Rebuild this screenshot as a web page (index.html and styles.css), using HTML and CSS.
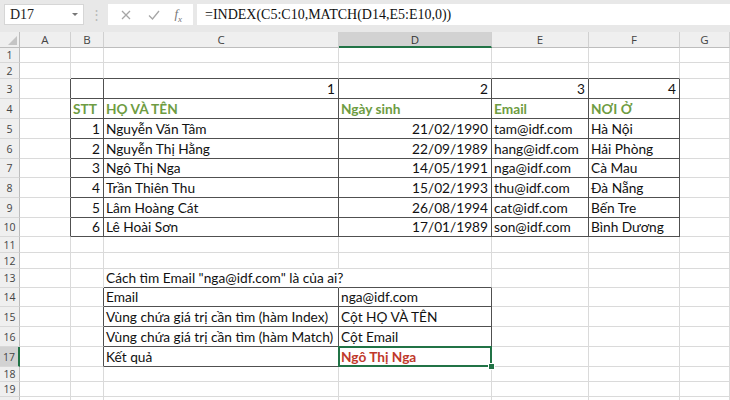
FILE: index.html
```html
<!DOCTYPE html>
<html>
<head>
<meta charset="utf-8">
<link rel="stylesheet" href="styles.css">
</head>
<body>
<div class="app">
  <div class="toolbar">
    <div class="namebox"><span class="nb-text">D17</span><span class="caret"></span></div>
    <div class="dots">⋮</div>
    <div class="fxbox">
      <svg class="ic" width="14" height="14" viewBox="0 0 14 14"><path d="M3 3 L11 11 M11 3 L3 11" stroke="#a6a6a6" stroke-width="1.3" fill="none"/></svg>
      <svg class="ic" width="14" height="14" viewBox="0 0 14 14"><path d="M2 7.5 L5.5 11 L12 3" stroke="#a6a6a6" stroke-width="1.3" fill="none"/></svg>
      <span class="fx">f<sub>x</sub></span>
    </div>
    <div class="formula">=INDEX(C5:C10,MATCH(D14,E5:E10,0))</div>
  </div>
  <div class="sheet">
    <!-- header -->
    <div class="corner"><span class="tri"></span></div>
    <div class="ch">A</div><div class="ch">B</div><div class="ch">C</div><div class="ch sel">D</div><div class="ch">E</div><div class="ch">F</div><div class="ch">G</div>
    <!-- 1 -->
    <div class="rh">1</div><div class="c"></div><div class="c"></div><div class="c"></div><div class="c"></div><div class="c"></div><div class="c"></div><div class="c"></div>
    <!-- 2 -->
    <div class="rh">2</div><div class="c"></div><div class="c tt"></div><div class="c tt"></div><div class="c tt"></div><div class="c tt"></div><div class="c tt"></div><div class="c"></div>
    <!-- 3 -->
    <div class="rh">3</div><div class="c tl"></div><div class="c t"></div><div class="c t r">1</div><div class="c t r">2</div><div class="c t r">3</div><div class="c t r">4</div><div class="c"></div>
    <!-- 4 -->
    <div class="rh">4</div><div class="c tl"></div><div class="c t hd">STT</div><div class="c t hd">HỌ VÀ TÊN</div><div class="c t hd">Ngày sinh</div><div class="c t hd">Email</div><div class="c t hd">NƠI Ở</div><div class="c"></div>
    <!-- 5 -->
    <div class="rh">5</div><div class="c tl"></div><div class="c t r">1</div><div class="c t">Nguyễn Văn Tâm</div><div class="c t r">21/02/1990</div><div class="c t">tam@idf.com</div><div class="c t">Hà Nội</div><div class="c"></div>
    <!-- 6 -->
    <div class="rh">6</div><div class="c tl"></div><div class="c t r">2</div><div class="c t">Nguyễn Thị Hằng</div><div class="c t r">22/09/1989</div><div class="c t">hang@idf.com</div><div class="c t">Hải Phòng</div><div class="c"></div>
    <!-- 7 -->
    <div class="rh">7</div><div class="c tl"></div><div class="c t r">3</div><div class="c t">Ngô Thị Nga</div><div class="c t r">14/05/1991</div><div class="c t">nga@idf.com</div><div class="c t">Cà Mau</div><div class="c"></div>
    <!-- 8 -->
    <div class="rh">8</div><div class="c tl"></div><div class="c t r">4</div><div class="c t">Trần Thiên Thu</div><div class="c t r">15/02/1993</div><div class="c t">thu@idf.com</div><div class="c t">Đà Nẵng</div><div class="c"></div>
    <!-- 9 -->
    <div class="rh">9</div><div class="c tl"></div><div class="c t r">5</div><div class="c t">Lâm Hoàng Cát</div><div class="c t r">26/08/1994</div><div class="c t">cat@idf.com</div><div class="c t">Bến Tre</div><div class="c"></div>
    <!-- 10 -->
    <div class="rh">10</div><div class="c tl"></div><div class="c t r">6</div><div class="c t">Lê Hoài Sơn</div><div class="c t r">17/01/1989</div><div class="c t">son@idf.com</div><div class="c t">Bình Dương</div><div class="c"></div>
    <!-- 11 -->
    <div class="rh">11</div><div class="c"></div><div class="c"></div><div class="c"></div><div class="c"></div><div class="c"></div><div class="c"></div><div class="c"></div>
    <!-- 12 -->
    <div class="rh">12</div><div class="c"></div><div class="c"></div><div class="c"></div><div class="c"></div><div class="c"></div><div class="c"></div><div class="c"></div>
    <!-- 13 -->
    <div class="rh">13</div><div class="c"></div><div class="c"></div><div class="c tt over">Cách tìm Email "nga@idf.com" là của ai?</div><div class="c tt"></div><div class="c"></div><div class="c"></div><div class="c"></div>
    <!-- 14 -->
    <div class="rh">14</div><div class="c"></div><div class="c tl"></div><div class="c t">Email</div><div class="c t">nga@idf.com</div><div class="c"></div><div class="c"></div><div class="c"></div>
    <!-- 15 -->
    <div class="rh">15</div><div class="c"></div><div class="c tl"></div><div class="c t">Vùng chứa giá trị cần tìm (hàm Index)</div><div class="c t">Cột HỌ VÀ TÊN</div><div class="c"></div><div class="c"></div><div class="c"></div>
    <!-- 16 -->
    <div class="rh">16</div><div class="c"></div><div class="c tl"></div><div class="c t">Vùng chứa giá trị cần tìm (hàm Match)</div><div class="c t">Cột Email</div><div class="c"></div><div class="c"></div><div class="c"></div>
    <!-- 17 -->
    <div class="rh rsel">17</div><div class="c"></div><div class="c tl"></div><div class="c t">Kết quả</div><div class="c t res active">Ngô Thị Nga</div><div class="c"></div><div class="c"></div><div class="c"></div>
    <!-- 18 -->
    <div class="rh">18</div><div class="c"></div><div class="c"></div><div class="c"></div><div class="c"></div><div class="c"></div><div class="c"></div><div class="c"></div>
    <!-- 19 -->
    <div class="rh">19</div><div class="c"></div><div class="c"></div><div class="c"></div><div class="c"></div><div class="c"></div><div class="c"></div><div class="c"></div>
    <!-- 20 -->
    <div class="rh"></div><div class="c"></div><div class="c"></div><div class="c"></div><div class="c"></div><div class="c"></div><div class="c"></div><div class="c"></div>
  </div>
</div>
</body>
</html>
```
FILE: styles.css
```css
* { box-sizing: border-box; }
html, body { margin: 0; padding: 0; background: #fff; }
.app { width: 730px; height: 400px; overflow: hidden; font-family: "Lato", "Open Sans", sans-serif; }

.toolbar {
  height: 32px;
  background: #e8e8e8;
  display: flex;
  align-items: flex-start;
  padding: 4px 0 0 4px;
}
.namebox {
  width: 80px; height: 21px;
  background: #fff;
  border: 1px solid #d6d6d6;
  display: flex; align-items: center; justify-content: space-between;
  padding: 0 5px;
}
.nb-text { font-family: "Liberation Serif", serif; font-size: 14px; color: #222; }
.caret { width: 0; height: 0; border-left: 3px solid transparent; border-right: 3px solid transparent; border-top: 3px solid #777; }
.dots { width: 24px; text-align: center; color: #b8b8b8; font-size: 13px; line-height: 21px; }
.fxbox {
  width: 85px; height: 21px; background: #fff;
  display: flex; align-items: center; justify-content: space-around;
  padding: 0 4px;
}
.fx { font-family: "Liberation Serif", serif; font-style: italic; color: #777; font-size: 13px; }
.fx sub { font-size: 9px; }
.formula {
  flex: 1; height: 21px; margin-left: 4px; background: #fff;
  font-family: "Liberation Serif", serif; font-size: 14px; color: #111;
  line-height: 21px; padding-left: 8px;
  white-space: nowrap;
}

.sheet {
  display: grid;
  grid-template-columns: 20px 51px 33px 235px 153px 97px 91px 1fr;
  grid-template-rows: 16px 15px 16px 20px 20px 20px 20px 19px 20px 20px 19px 16px 16px 19px 19px 20px 20px 20px 15px 15px 16px;
  font-size: 13.7px;
  color: #111;
}
.corner { background: #efefef; border-right: 1px solid #bdbdbd; border-bottom: 1px solid #bdbdbd; position: relative; }
.tri { position: absolute; right: 2px; bottom: 2px; width: 0; height: 0; border-left: 9px solid transparent; border-bottom: 9px solid #c4c4c4; }
.ch {
  background: #efefef; border-right: 1px solid #d0d0d0; border-bottom: 1px solid #bdbdbd;
  font-size: 11.5px; color: #444; text-align: center; line-height: 15px;
  font-family: "Open Sans", sans-serif;
}
.ch.sel { background: #d2d2d2; border-bottom: 2px solid #217346; color: #333; }
.rh {
  background: #efefef; border-right: 1px solid #bdbdbd; border-bottom: 1px solid #d8d8d8;
  font-size: 10.5px; color: #444; text-align: center;
  font-family: "Open Sans", sans-serif;
  display: flex; align-items: center; justify-content: center;
}
.rh.rsel { background: #d2d2d2; border-right: 2px solid #217346; }
.c {
  border-right: 1px solid #dadada; border-bottom: 1px solid #dadada;
  display: flex; align-items: flex-end;
  padding: 0 3px 1px 2px;
  white-space: nowrap; overflow: hidden;
  line-height: 17px;
}
.c.r { justify-content: flex-end; }
.c.t { border-right-color: #505050; border-bottom-color: #505050; }
.c.tt { border-bottom-color: #505050; }
.c.tl { border-right-color: #505050; }
.c.hd { color: #6e9c42; font-weight: bold; }
.c.over { overflow: visible; border-right-color: transparent; }
.c.res { color: #c0392b; font-weight: bold; }
.c.active { position: relative; overflow: visible; }
.c.active::before {
  content: ""; position: absolute; left: -1px; top: -1px; right: -1px; bottom: -1px;
  border: 2px solid #217346; pointer-events: none;
}
.c.active::after {
  content: ""; position: absolute; right: -4px; bottom: -4px; width: 5px; height: 5px;
  background: #217346; border: 1px solid #fff;
}
```
